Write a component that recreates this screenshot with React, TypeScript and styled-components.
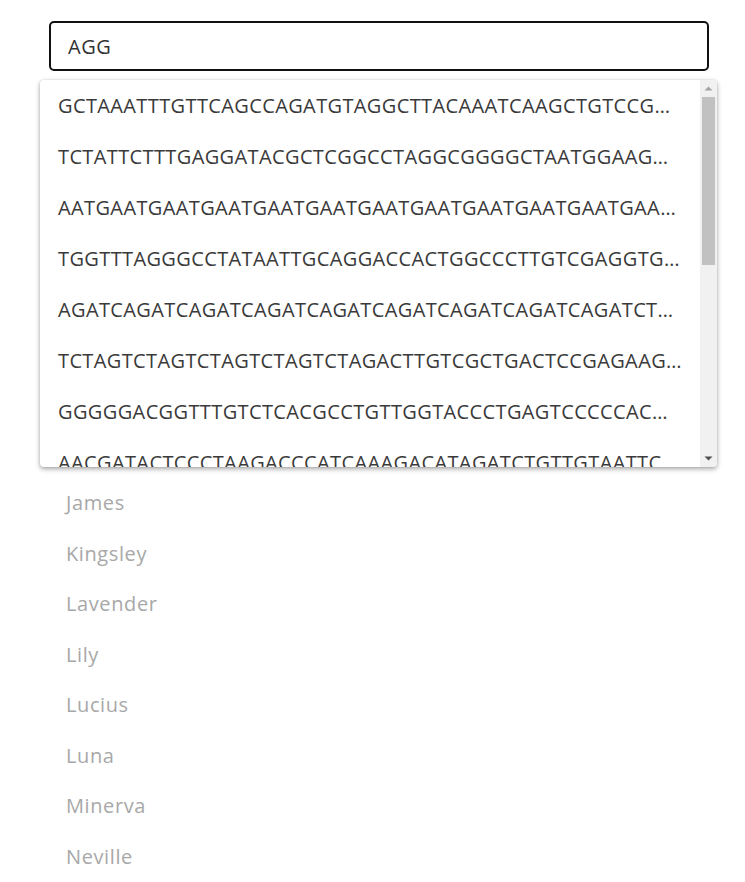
import React from "react";
import styled, { createGlobalStyle } from "styled-components";

const GlobalStyle = createGlobalStyle`
  html, body { margin: 0; padding: 0; background: #ffffff; }
  body { font-family: "Open Sans", "Noto Sans", "Liberation Sans", sans-serif; }
`;

const Page = styled.div`
  padding: 21px 36px 0 49px;
  width: 660px;
  position: relative;
`;

const SearchBox = styled.input`
  display: block;
  box-sizing: border-box;
  width: 660px;
  height: 50px;
  border: 2px solid #111;
  border-radius: 5px;
  padding: 0 17px;
  font-family: inherit;
  font-size: 20px;
  letter-spacing: 0.5px;
  color: #333;
  outline: none;
  background: #fff;
`;

const Dropdown = styled.div`
  position: absolute;
  top: 80px;
  left: 40px;
  width: 677px;
  height: 387px;
  display: flex;
  background: #fff;
  border-radius: 4px;
  overflow: hidden;
  box-shadow: 0 2px 5px rgba(0, 0, 0, 0.35), 0 0 2px rgba(0, 0, 0, 0.12);
  z-index: 2;
`;

const OptionList = styled.ul`
  flex: 1;
  min-width: 0;
  margin: 0;
  padding: 0;
  list-style: none;
  overflow: hidden;
`;

const Option = styled.li`
  padding: 12px 18px;
  line-height: 27px;
  font-size: 20px;
  color: #3a3a3a;
  white-space: nowrap;
  overflow: hidden;
  text-overflow: ellipsis;
  letter-spacing: 0.38px;
`;

const ScrollTrack = styled.div`
  width: 17px;
  flex: none;
  display: flex;
  flex-direction: column;
  background: #f1f1f1;
`;

const ScrollButton = styled.div`
  height: 17px;
  flex: none;
  display: flex;
  align-items: center;
  justify-content: center;
`;

const Thumb = styled.div`
  height: 168px;
  margin: 0 2px;
  background: #c1c1c1;
`;

const Spacer = styled.div`
  flex: 1;
`;

const Names = styled.ul`
  margin: 3px 0 0;
  padding: 0;
  list-style: none;
`;

const Name = styled.li`
  padding: 12px 17px;
  line-height: 26.5px;
  font-size: 20px;
  letter-spacing: 0.6px;
  color: #a8a8a8;
`;

const Arrow = ({ up, color }: { up?: boolean; color: string }) => (
  <svg width="9" height="5" viewBox="0 0 9 5">
    <path d={up ? "M0.5 4.5 L4.5 0.5 L8.5 4.5 Z" : "M0.5 0.5 L4.5 4.5 L8.5 0.5 Z"} fill={color} />
  </svg>
);

const sequences = [
  "GCTAAATTTGTTCAGCCAGATGTAGGCTTACAAATCAAGCTGTCCGATGGACTAAG",
  "TCTATTCTTTGAGGATACGCTCGGCCTAGGCGGGGCTAATGGAAGGCCACAGGTAC",
  "AATGAATGAATGAATGAATGAATGAATGAATGAATGAATGAATGAATGAATGAATG",
  "TGGTTTAGGGCCTATAATTGCAGGACCACTGGCCCTTGTCGAGGTGTACAAGGTAG",
  "AGATCAGATCAGATCAGATCAGATCAGATCAGATCAGATCAGATCTAGGCATTCAG",
  "TCTAGTCTAGTCTAGTCTAGTCTAGACTTGTCGCTGACTCCGAGAAGGTTACCAGG",
  "GGGGGACGGTTTGTCTCACGCCTGTTGGTACCCTGAGTCCCCCACGGGATTCAGTA",
  "AACGATACTCCCTAAGACCCATCAAAGACATAGATCTGTTGTAATTCAGGCTTAGC",
  "CCTAGGATTACAGGTCCAATGCATGGACTTAGCCAGGTTACGATCCGATAGGCTTA",
  "GATTACAGGTTCCAAGGTACCTGAACCGTAGGTTACCGTTAGCAAGGTCTAGCATG",
];

const names = [
  "Albus",
  "Bellatrix",
  "Cedric",
  "Draco",
  "Fred",
  "Ginny",
  "Harry",
  "Hermione",
  "James",
  "Kingsley",
  "Lavender",
  "Lily",
  "Lucius",
  "Luna",
  "Minerva",
  "Neville",
  "Ron",
];

export default function App() {
  return (
    <>
      <GlobalStyle />
      <Page>
        <SearchBox defaultValue="AGG" />
        <Dropdown>
          <OptionList>
            {sequences.map((s, i) => (
              <Option key={i}>{s}</Option>
            ))}
          </OptionList>
          <ScrollTrack>
            <ScrollButton>
              <Arrow up color="#a3a3a3" />
            </ScrollButton>
            <Thumb />
            <Spacer />
            <ScrollButton>
              <Arrow color="#505050" />
            </ScrollButton>
          </ScrollTrack>
        </Dropdown>
        <Names>
          {names.map((n) => (
            <Name key={n}>{n}</Name>
          ))}
        </Names>
      </Page>
    </>
  );
}
